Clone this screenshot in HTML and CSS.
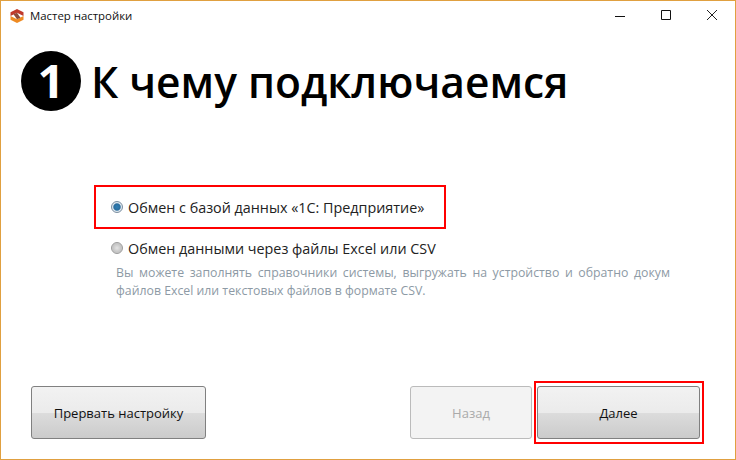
FILE: index.html
```html
<!DOCTYPE html>
<html lang="ru">
<head>
    <meta charset="UTF-8">
    <title>Мастер настройки</title>
    <link rel="stylesheet" href="styles.css">
</head>
<body>
    <div class="window">
        <div class="titlebar">
            <svg class="app-icon" width="14" height="14" viewBox="0 0 14 14">
                <path d="M7 0L13.5 3.2V7L7 3.8L0.5 7V3.2Z" fill="#c0392b"/>
                <path d="M7 14L0.5 10.8V7L7 10.2L13.5 7V10.8Z" fill="#ee8a22"/>
                <path d="M3.5 5.2L7 3.8L10.5 8.8L7 10.2Z" fill="#8c4a3a"/>
            </svg>
            <span class="title">Мастер настройки</span>
            <div class="controls">
                <svg width="46" height="29" viewBox="0 0 46 29"><path d="M18 15.5H28" stroke="#111" fill="none"/></svg>
                <svg width="46" height="29" viewBox="0 0 46 29"><path d="M18.5 9.5H27.5V18.5H18.5Z" stroke="#111" fill="none"/></svg>
                <svg width="46" height="29" viewBox="0 0 46 29"><path d="M18 9L28 19M28 9L18 19" stroke="#222" fill="none"/></svg>
            </div>
        </div>

        <div class="heading">
            <div class="step">1</div>
            <h1>К чему подключаемся</h1>
        </div>

        <div class="options">
            <label class="option">
                <span class="radio checked"></span>
                Обмен с базой данных «1С: Предприятие»
            </label>
            <label class="option second">
                <span class="radio"></span>
                Обмен данными через файлы Excel или CSV
            </label>
            <p class="hint"><span class="hint-wide">Вы можете заполнять справочники системы, выгружать на устройство и обратно документы из</span><br>файлов Excel или текстовых файлов в формате CSV.</p>
        </div>

        <div class="buttons">
            <button class="btn btn-abort" type="button">Прервать настройку</button>
            <button class="btn btn-back" type="button" disabled>Назад</button>
            <button class="btn btn-next" type="button">Далее</button>
        </div>

        <!-- красные рамки поверх окна -->
        <div class="mark mark-option"></div>
        <div class="mark mark-next"></div>
    </div>
</body>
</html>
```

FILE: styles.css
```css
html, body {
    margin: 0;
    height: 100%;
    overflow: hidden;
}

body {
    font-family: "Open Sans", "Noto Sans", sans-serif;
    background-color: #fff;
}

.window {
    position: relative;
    box-sizing: border-box;
    width: 736px;
    height: 460px;
    border: 1px solid #e0a040;
    display: flex;
    flex-direction: column;
    color: #000;
}

.titlebar {
    display: flex;
    align-items: center;
    height: 29px;
    padding-left: 9px;
    flex: none;
}

.app-icon {
    margin-right: 6px;
}

.title {
    font-size: 11.4px;
    color: #111;
}

.controls {
    display: flex;
    margin-left: auto;
}

.controls svg {
    display: block;
}

.heading {
    display: flex;
    align-items: center;
    margin: 21px 0 0 20px;
    height: 60px;
    flex: none;
}

.step {
    width: 60px;
    height: 60px;
    border-radius: 50%;
    background-color: #000;
    color: #fff;
    font-size: 47px;
    font-weight: 700;
    line-height: 59px;
    text-align: center;
    margin-right: 10px;
}

h1 {
    margin: 0;
    font-size: 42.5px;
    font-weight: 600;
    white-space: nowrap;
}

.options {
    margin: 86px 0 0 110px;
    width: 559px;
    overflow: hidden;
    flex: none;
}

.option {
    display: flex;
    align-items: center;
    height: 20px;
    font-size: 14.35px;
    color: #222;
    white-space: nowrap;
}

.option.second {
    margin-top: 21px;
}

.radio {
    box-sizing: border-box;
    width: 12px;
    height: 12px;
    margin-right: 5px;
    border-radius: 50%;
    border: 1px solid #9a9a9a;
    background: radial-gradient(circle, #e4e4e4 0, #c4c4c4 60%, #f0f0f0 100%);
    flex: none;
}

.radio.checked {
    border-color: #7a8ea0;
    background: radial-gradient(circle, #2f7fb5 0, #2a6d9e 45%, #dfe8ef 60%);
}

.hint {
    margin: 6px 0 0 5px;
    font-size: 12.3px;
    line-height: 18px;
    color: #8d9aa5;
    white-space: nowrap;
}

/* первая строка в оригинале выровнена по ширине */
.hint-wide {
    word-spacing: 2.4px;
}

.buttons {
    display: flex;
    margin: auto 35px 20px 30px;
    flex: none;
}

.btn {
    box-sizing: border-box;
    height: 53px;
    border: 1px solid #808080;
    border-radius: 3px;
    background: linear-gradient(#f2f2f2 0, #ebebeb 50%, #dcdcdc 51%, #cbcbcb 100%);
    font-family: inherit;
    font-size: 13px;
    color: #111;
    padding: 0;
}

.btn-abort {
    width: 175px;
}

.btn-back {
    width: 122px;
    margin-left: auto;
    margin-right: 5px;
    border-color: #bbb;
    background: #f3f3f3;
    color: #aaa;
}

.btn-next {
    width: 163px;
}

.mark {
    position: absolute;
    box-sizing: border-box;
    border: 2px solid #f00;
}

.mark-option {
    left: 93px;
    top: 184px;
    width: 352px;
    height: 44px;
}

.mark-next {
    left: 533px;
    top: 380px;
    width: 170px;
    height: 63px;
}
```
